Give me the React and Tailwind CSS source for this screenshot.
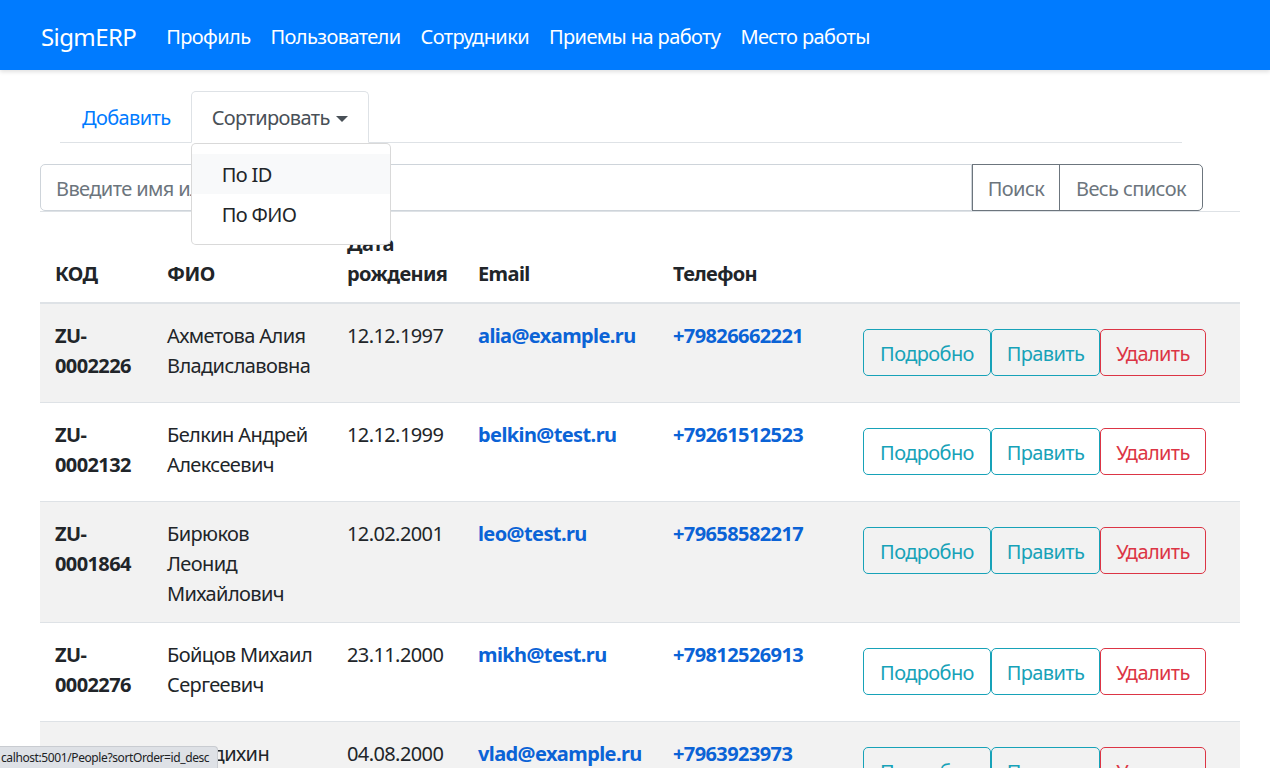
import React from 'react';

const people = [
  { code: ['ZU-', '0002226'], name: ['Ахметова Алия', 'Владиславовна'], born: '12.12.1997', email: 'alia@example.ru', phone: '+79826662221' },
  { code: ['ZU-', '0002132'], name: ['Белкин Андрей', 'Алексеевич'], born: '12.12.1999', email: 'belkin@test.ru', phone: '+79261512523' },
  { code: ['ZU-', '0001864'], name: ['Бирюков', 'Леонид', 'Михайлович'], born: '12.02.2001', email: 'leo@test.ru', phone: '+79658582217' },
  { code: ['ZU-', '0002276'], name: ['Бойцов Михаил', 'Сергеевич'], born: '23.11.2000', email: 'mikh@test.ru', phone: '+79812526913' },
  { code: ['ZU-', '0002281'], name: ['Бородихин', 'Владислав'], born: '04.08.2000', email: 'vlad@example.ru', phone: '+7963923973' },
];

const navLinks = ['Профиль', 'Пользователи', 'Сотрудники', 'Приемы на работу', 'Место работы'];

const Lines = ({ items }) => (
  <>
    {items.map(t => (
      <span key={t} className="block whitespace-nowrap">{t}</span>
    ))}
  </>
);

const App = () => {
  return (
    <div className="h-screen overflow-hidden bg-white text-[20px] leading-[30px] tracking-[-0.6px] text-[#212529]"
         style={{ fontFamily: '"Noto Sans", "Open Sans", sans-serif' }}>
      {/* Navbar */}
      <nav className="relative z-10 flex h-[70px] items-center bg-[#007bff] pl-[41px] pt-[3px] shadow-[0_2px_4px_rgba(0,0,0,0.12)]">
        <span className="mr-[20px] text-[24px] leading-[38px] text-white">SigmERP</span>
        <div className="flex">
          {navLinks.map(l => (
            <a key={l} className="px-[10px] py-[10px] text-white">{l}</a>
          ))}
        </div>
      </nav>

      <div className="pt-[21px]">
        {/* Tabs */}
        <div className="ml-[60px] w-[1122px] border-b border-[#dee2e6]">
          <ul className="-mb-px flex">
            <li>
              <a className="block border border-transparent pl-[21px] pr-[19px] pb-[9px] pt-[11px] text-[#007bff]">Добавить</a>
            </li>
            <li className="relative">
              <a className="flex items-center rounded-t-[5px] border border-[#dee2e6] border-b-white bg-white px-[20px] pb-[9px] pt-[11px] text-[#495057]">
                Сортировать
                <span className="ml-[6px] mt-[1px] h-0 w-0 border-x-[6px] border-t-[6px] border-x-transparent border-t-[#495057]" />
              </a>
              <div className="absolute left-0 top-full z-20 w-[200px] rounded-[5px] border border-[rgba(0,0,0,0.15)] bg-white py-[10px]">
                <div className="bg-[#f8f9fa] px-[30px] pb-[4px] pt-[6px] text-[#212529]">По ID</div>
                <div className="px-[30px] pb-[4px] pt-[6px] text-[#212529]">По ФИО</div>
              </div>
            </li>
          </ul>
        </div>

        {/* Search */}
        <div className="ml-[40px] mt-[21px] flex w-[1163px]">
          <input
            className="h-[47px] flex-1 rounded-l-[5px] border border-[#ced4da] px-[15px] pt-[2px] text-[20px] tracking-[-0.6px] text-[#495057] placeholder:text-[#6c757d] outline-none"
            placeholder="Введите имя или код"
          />
          <button className="h-[47px] w-[88px] border border-[#6c757d] pt-[2px] text-[#6c757d]">Поиск</button>
          <button className="-ml-px h-[47px] w-[144px] rounded-r-[5px] border border-[#6c757d] pt-[2px] text-[#6c757d]">Весь список</button>
        </div>

        {/* Table */}
        <table className="ml-[40px] w-[1200px] table-fixed border-collapse">
          <colgroup>
            <col className="w-[112px]" />
            <col className="w-[180px]" />
            <col className="w-[131px]" />
            <col className="w-[195px]" />
            <col className="w-[190px]" />
            <col className="w-[392px]" />
          </colgroup>
          <thead>
            <tr className="border-y border-[#dee2e6] border-b-2 text-left align-bottom font-bold">
              <th className="px-[15px] pb-[13px] pt-[17px]">КОД</th>
              <th className="px-[15px] pb-[13px] pt-[17px]">ФИО</th>
              <th className="px-[15px] pb-[13px] pt-[17px]"><Lines items={['Дата', 'рождения']} /></th>
              <th className="px-[15px] pb-[13px] pt-[17px]">Email</th>
              <th className="px-[15px] pb-[13px] pt-[17px]">Телефон</th>
              <th className="px-[15px] pb-[13px] pt-[17px]"></th>
            </tr>
          </thead>
          <tbody>
            {people.map((p, i) => (
              <tr key={p.email} className={`border-t border-[#dee2e6] align-top ${i % 2 === 0 ? 'bg-[#f2f2f2]' : 'bg-white'}`}>
                <td className="px-[15px] pb-[13px] pt-[17px] font-bold"><Lines items={p.code} /></td>
                <td className="px-[15px] pb-[13px] pt-[17px]"><Lines items={p.name} /></td>
                <td className="px-[15px] pb-[13px] pt-[17px]">{p.born}</td>
                <td className="px-[15px] pb-[13px] pt-[17px] font-bold text-[#0b63d6]">{p.email}</td>
                <td className="px-[15px] pb-[13px] pt-[17px] font-bold text-[#0b63d6]">{p.phone}</td>
                <td className="px-[15px] pb-[26px] pt-[25px]">
                  <div className="flex">
                    <button className="h-[47px] w-[128px] rounded-[5px] border border-[#17a2b8] pt-[2px] text-[#17a2b8]">Подробно</button>
                    <button className="h-[47px] w-[109px] rounded-[5px] border border-[#17a2b8] pt-[2px] text-[#17a2b8]">Править</button>
                    <button className="h-[47px] w-[106px] rounded-[5px] border border-[#dc3545] pt-[2px] text-[#dc3545]">Удалить</button>
                  </div>
                </td>
              </tr>
            ))}
          </tbody>
        </table>
      </div>

      {/* Browser status bubble */}
      <div className="fixed bottom-0 left-0 z-30 flex h-[22px] w-[218px] items-center overflow-hidden rounded-tr-[4px] border-t border-r border-[#c9ccd1] bg-[#dee1e6] text-[12px] leading-[16px] tracking-[-0.4px] text-[#202124]"
           style={{ fontFamily: '"Noto Sans", sans-serif' }}>
        <span className="ml-[1px] whitespace-nowrap">calhost:5001/People?sortOrder=id_desc</span>
      </div>
    </div>
  );
};

export default App;
